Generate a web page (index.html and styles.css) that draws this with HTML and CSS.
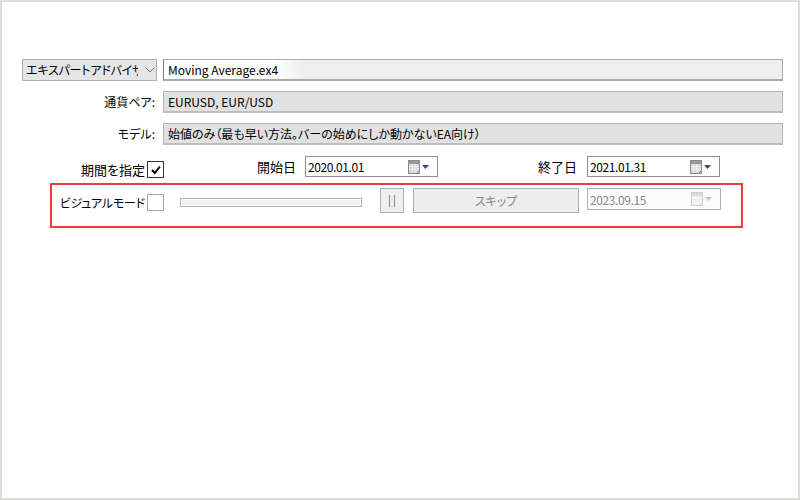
FILE: index.html
```html
<!DOCTYPE html>
<html lang="ja">
<head>
<meta charset="utf-8">
<title>Tester</title>
<link rel="stylesheet" href="styles.css">
</head>
<body>
<div class="frame">
  <div class="form">
    <div class="row">
      <div class="select">
        <span class="select-text">エキスパートアドバイザ</span>
        <svg class="chev" width="10" height="6" viewBox="0 0 10 6"><polyline points="0.5,0.5 5,5 9.5,0.5" fill="none" stroke="#7a7a7a" stroke-width="1"/></svg>
      </div>
      <div class="field field-edit">Moving Average.ex4</div>
    </div>
    <div class="row">
      <div class="label">通貨ペア:</div>
      <div class="field field-ro">EURUSD, EUR/USD</div>
    </div>
    <div class="row">
      <div class="label">モデル:</div>
      <div class="field field-ro">始値のみ（最も早い方法。バーの始めにしか動かないEA向け）</div>
    </div>

    <div class="period">
      <div class="check-cell period-check">
        <span class="check-label">期間を指定</span>
        <span class="checkbox checked"><svg width="12" height="12" viewBox="0 0 12 12"><polyline points="2,6 4.8,9 10,2.5" fill="none" stroke="#000" stroke-width="2"/></svg></span>
      </div>
      <div class="date-cell start">
        <span class="date-label">開始日</span>
        <div class="date">
          <span class="date-text">2020.01.01</span>
          <span class="cal">
            <svg width="22" height="14" viewBox="0 0 22 14"><rect x="0.5" y="0.5" width="11" height="13" fill="#d6d6d6" stroke="#8c8c8c"/><rect x="1" y="1" width="10" height="3" fill="#9a9a9a"/><path d="M1 6.5H11M1 9H11M4 4V13M7 4V13" stroke="#f2f2f2" stroke-width="1"/><path d="M8.5 13.5L11.5 10.5" stroke="#8c8c8c"/><polygon points="14,5 21,5 17.5,9" fill="#2f4f8f"/></svg>
          </span>
        </div>
      </div>
      <div class="date-cell end">
        <span class="date-label">終了日</span>
        <div class="date">
          <span class="date-text">2021.01.31</span>
          <span class="cal">
            <svg width="22" height="14" viewBox="0 0 22 14"><rect x="0.5" y="0.5" width="11" height="13" fill="#d6d6d6" stroke="#8c8c8c"/><rect x="1" y="1" width="10" height="3" fill="#9a9a9a"/><path d="M1 6.5H11M1 9H11M4 4V13M7 4V13" stroke="#f2f2f2" stroke-width="1"/><path d="M8.5 13.5L11.5 10.5" stroke="#8c8c8c"/><polygon points="14,5 21,5 17.5,9" fill="#2f4f8f"/></svg>
          </span>
        </div>
      </div>
    </div>

    <div class="visual">
      <div class="check-cell visual-check">
        <span class="check-label small">ビジュアルモード</span>
        <span class="checkbox"></span>
      </div>
      <div class="progress"></div>
      <div class="btn pause"><span class="bar-line"></span><span class="bar-line"></span></div>
      <div class="btn skip">スキップ</div>
      <div class="date disabled">
        <span class="date-text">2023.09.15</span>
        <span class="cal">
          <svg width="22" height="14" viewBox="0 0 22 14"><rect x="0.5" y="0.5" width="11" height="13" fill="#ededed" stroke="#cfcfcf"/><rect x="1" y="1" width="10" height="3" fill="#dcdcdc"/><path d="M1 6.5H11M1 9H11M4 4V13M7 4V13" stroke="#fafafa" stroke-width="1"/><polygon points="14,5 21,5 17.5,9" fill="#c8c8c8"/></svg>
        </span>
      </div>
    </div>
  </div>
</div>
</body>
</html>
```

FILE: styles.css
```css
* { box-sizing: border-box; }
html, body { margin: 0; padding: 0; background: #fff; }
body {
  font-family: "Noto Sans CJK JP", "Noto Sans", sans-serif;
  font-size: 13px;
  color: #000;
  font-feature-settings: "palt";
}
.frame {
  width: 800px;
  height: 500px;
  border: 2px solid #deded8;
  background: #fff;
}
.form {
  padding: 57px 15px 0 20px;
}
.row {
  display: flex;
  height: 22px;
  gap: 6px;
  margin-bottom: 10px;
}
.select {
  width: 135px;
  height: 22px;
  background: #e5e5e5;
  border: 1px solid #adadad;
  display: flex;
  align-items: center;
  padding-left: 3px;
  overflow: hidden;
}
.select-text {
  width: 112px;
  white-space: nowrap;
  overflow: hidden;
  font-size: 12px;
  letter-spacing: -0.2px;
  line-height: 20px;
}
.chev { margin-left: 7px; }
.label {
  width: 135px;
  text-align: right;
  padding-right: 2px;
  line-height: 22px;
  font-size: 12px;
}
.field {
  flex: 1;
  height: 22px;
  padding-left: 4px;
  line-height: 20px;
  font-size: 12px;
  white-space: nowrap;
}
.field-edit {
  background: linear-gradient(to right, #fff 0, #fff 110px, #efefef 140px);
  border: 1px solid #a9a9a9;
  border-left-color: #7a7a7a;
  border-bottom: 2px solid #a9a9a9;
}
.field-ro {
  background: #e1e1e1;
  border: 1px solid #b5b5b5;
  border-bottom: 2px solid #bdbdbd;
}
.period {
  display: flex;
  height: 23px;
  margin: 11px 0 0 30px;
}
.check-cell {
  width: 112px;
  display: flex;
  justify-content: flex-end;
  align-items: center;
  gap: 2px;
}
.period-check { align-self: flex-end; }
.check-label { white-space: nowrap; font-size: 13px; }
.check-label.small { font-size: 12px; letter-spacing: -0.2px; }
.checkbox {
  width: 17px;
  height: 17px;
  border: 1px solid #a8a8a8;
  background: #fff;
  display: flex;
  align-items: center;
  justify-content: center;
}
.checkbox.checked { border-color: #333; }
.date-cell {
  display: flex;
  justify-content: flex-end;
  align-items: center;
  align-self: flex-start;
  height: 21px;
}
.date-cell.start { width: 274px; gap: 9px; }
.date-cell.end { width: 282px; gap: 10px; }
.date-label { white-space: nowrap; }
.date {
  width: 133px;
  height: 21px;
  border: 1px solid #8f8f8f;
  background: #fff;
  display: flex;
  align-items: center;
  justify-content: space-between;
  padding: 0 7px 0 2px;
}
.date-text {
  font-size: 12px;
  letter-spacing: -0.4px;
  line-height: 19px;
}
.cal { display: flex; }
.visual {
  display: flex;
  align-items: flex-start;
  width: 693px;
  height: 45px;
  margin: 4px 0 0 28px;
  border: 2px solid #ee3b3b;
  padding-top: 3px;
}
.visual-check { margin-top: 6px; }
.progress {
  width: 182px;
  height: 9px;
  margin: 10px 0 0 16px;
  border: 1px solid #b4b4b4;
  background: #f2f2f2;
  box-shadow: inset 0 0 0 1px #fff;
}
.btn {
  height: 25px;
  background: #eeeeee;
  border: 1px solid #b0b0b0;
  display: flex;
  align-items: center;
  justify-content: center;
  color: #8a8a8a;
}
.pause {
  width: 24px;
  margin-left: 18px;
  gap: 4px;
}
.bar-line {
  width: 1px;
  height: 12px;
  background: #8a8a8a;
}
.skip {
  width: 166px;
  margin-left: 9px;
  font-size: 12px;
}
.date.disabled {
  width: 134px;
  height: 22px;
  margin-left: 8px;
  border-color: #b0b0b0;
  background: #fbfbfb;
  color: #8a8a8a;
}
```
